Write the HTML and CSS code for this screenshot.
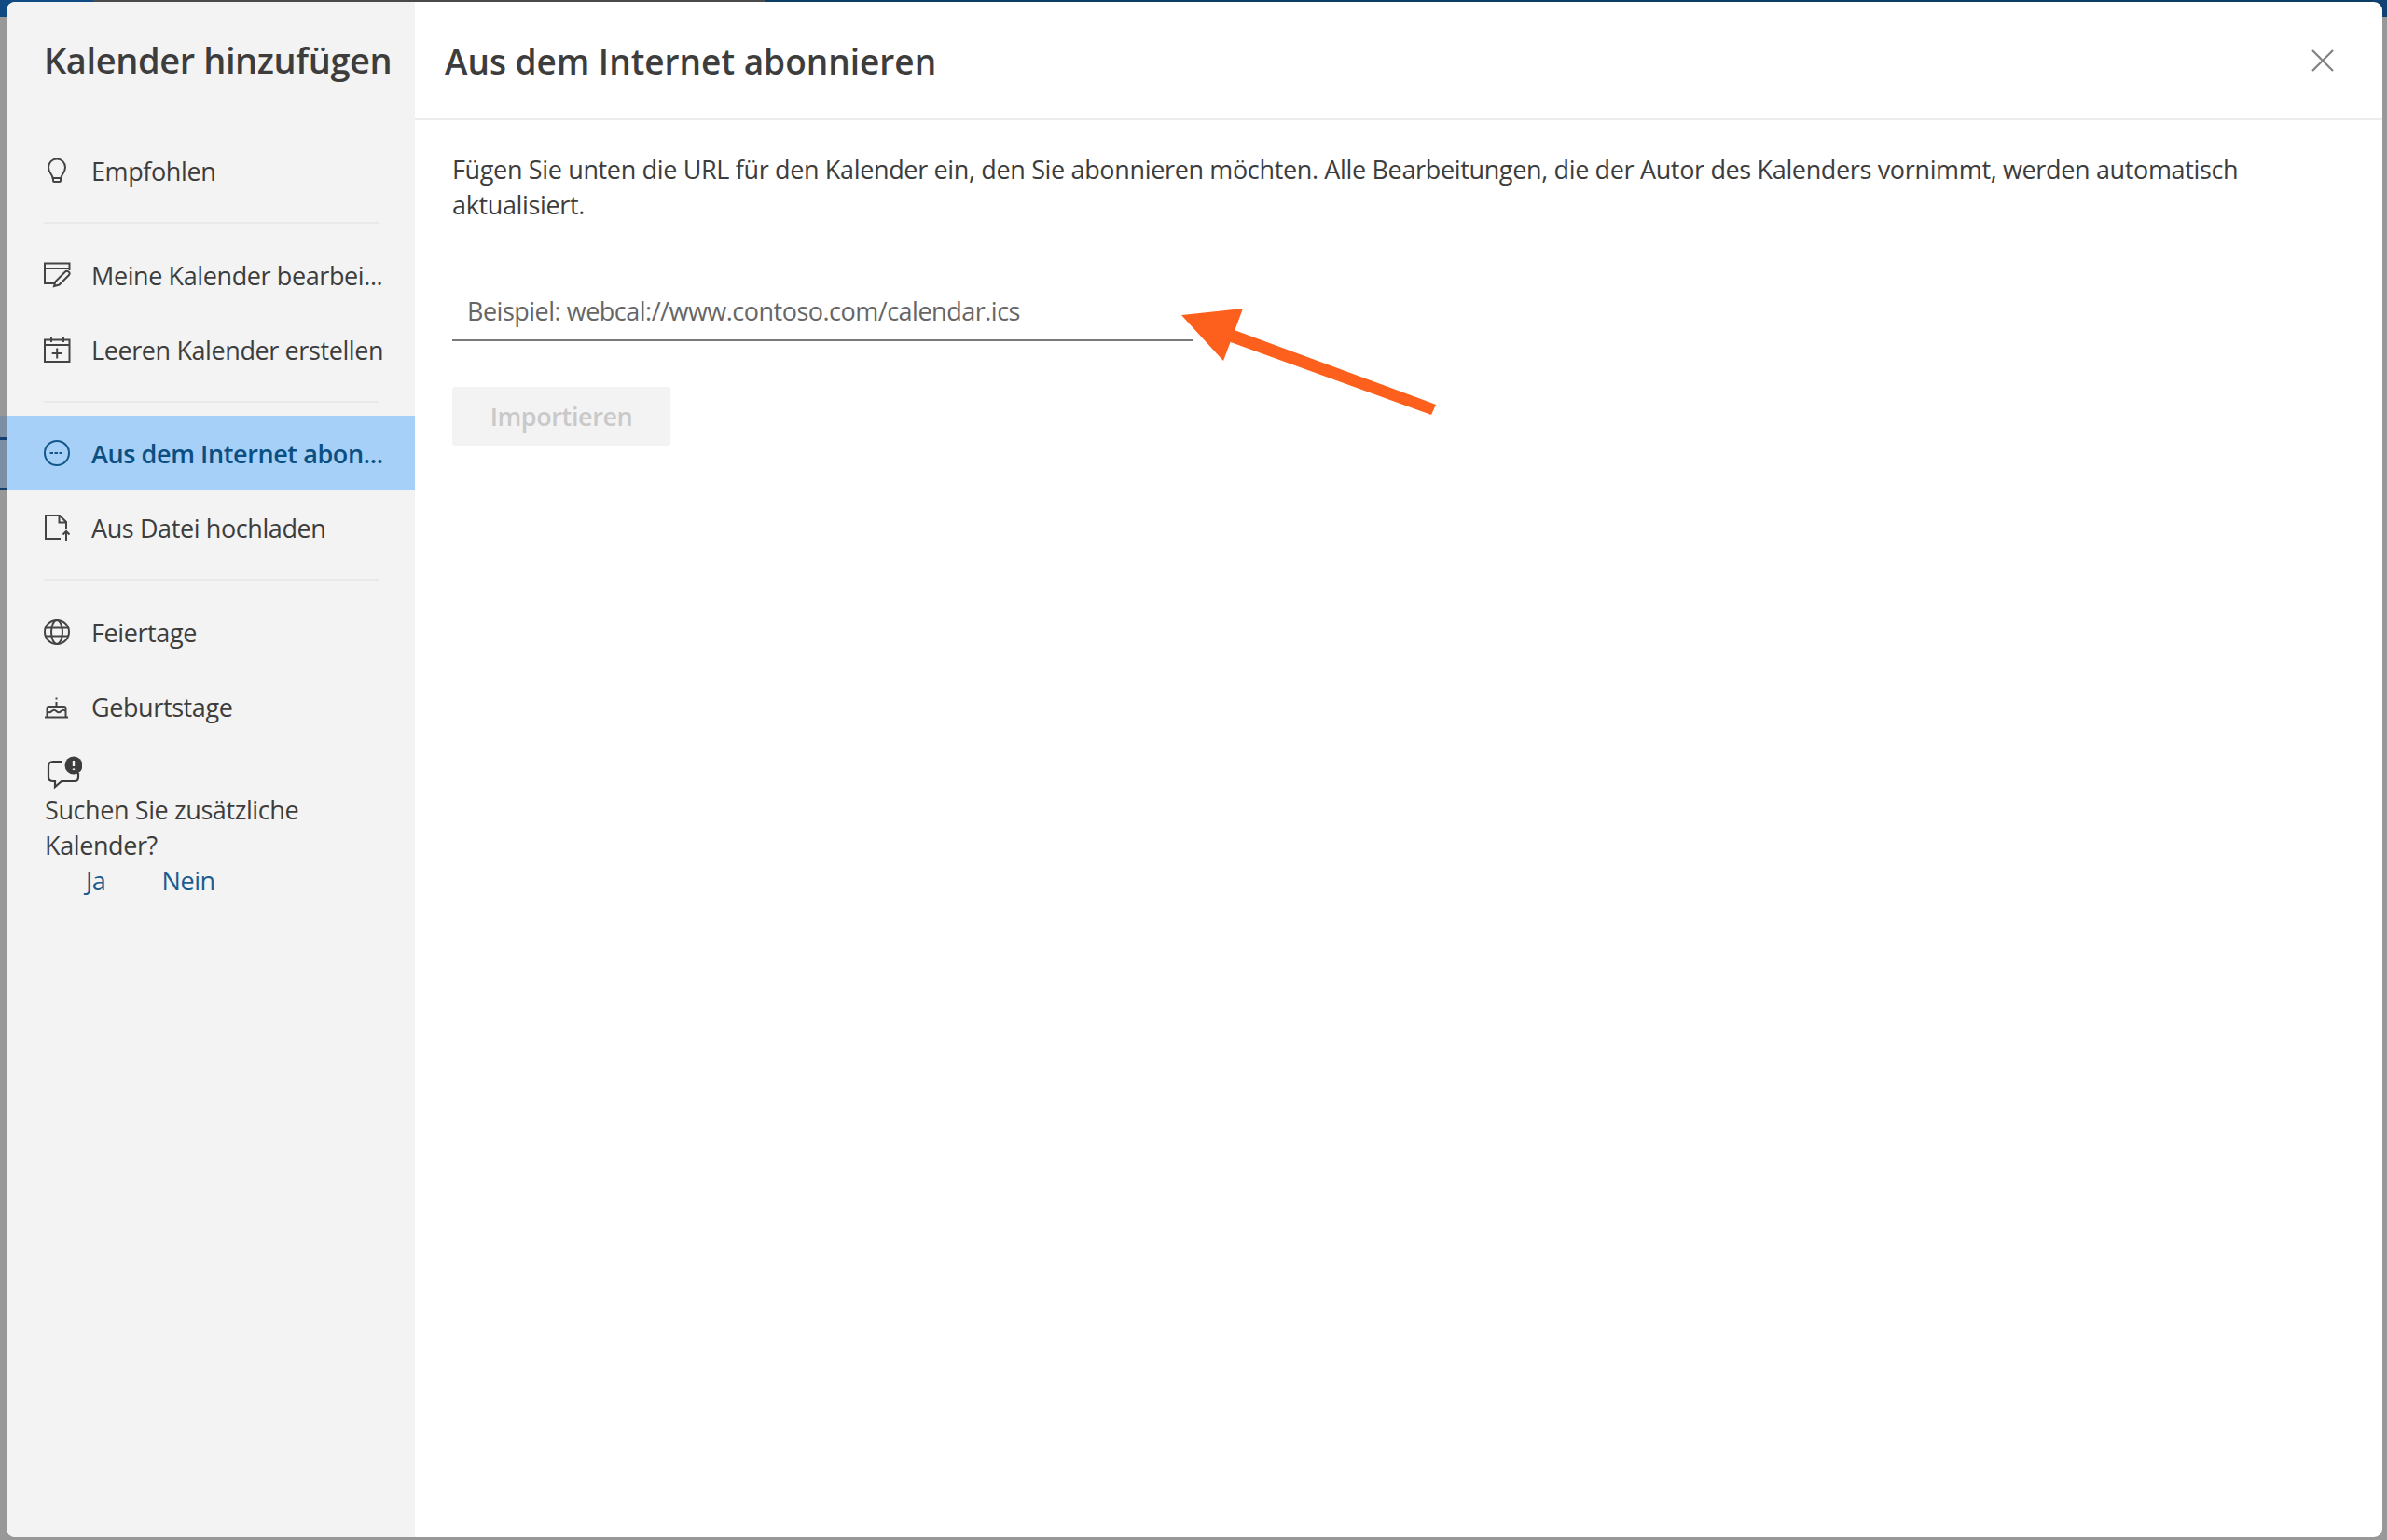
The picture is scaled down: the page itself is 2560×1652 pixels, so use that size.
FILE: index.html
```html
<!DOCTYPE html>
<html lang="de">
<head>
<meta charset="utf-8">
<title>Kalender hinzufügen</title>
<link rel="stylesheet" href="styles.css">
</head>
<body>
<div class="backdrop">
  <span class="bd-navy"></span>
  <span class="bd-gray"></span>
  <span class="bd-blue-left"></span>
  <span class="bd-blue-right"></span>
  <span class="bd-left-band"></span>
  <span class="bd-mark bd-mark-a"></span>
  <span class="bd-mark bd-mark-b"></span>
</div>
<div class="dialog">
  <aside class="sidebar">
    <h1 class="side-title">Kalender hinzufügen</h1>
    <div class="side-item">
      <svg class="ico" viewBox="0 0 28 28"><path d="M9.500 22c0-4-4.500-5.500-4.500-11.500a9 9 0 0 1 18 0C23 16.500 18.500 18 18.500 22zM10 22v2.500a1.500 1.500 0 0 0 1.500 1.500h5a1.500 1.500 0 0 0 1.500-1.500V22"/></svg>
      <span>Empfohlen</span>
    </div>
    <hr class="side-rule">
    <div class="side-item">
      <svg class="ico" viewBox="0 0 28 28"><path d="M12 23H1V1.500h26.500V9M1 7h26.500M11 26l1.500-5L23 10.500q1.500-1.500 3.500 0t.5 3.500L16.500 24.500z"/></svg>
      <span>Meine Kalender bearbei...</span>
    </div>
    <div class="side-item">
      <svg class="ico" viewBox="0 0 28 28"><path d="M1 3.500h26.500V27H1zM1 9h26.500M8 1v5M21 1v5M14.200 12.500v11M8.700 18h11"/></svg>
      <span>Leeren Kalender erstellen</span>
    </div>
    <hr class="side-rule side-rule-tight">
    <div class="side-item is-active">
      <svg class="ico" viewBox="0 0 28 28"><circle cx="14" cy="14" r="13"/><path class="dash" d="M6.500 14h15"/></svg>
      <span>Aus dem Internet abon...</span>
    </div>
    <div class="side-item">
      <svg class="ico" viewBox="0 0 28 28"><path d="M18 26H2V1h15l7 7v8M16.500 1v7.500H24M24 28V18M20.500 21.500L24 18l3.500 3.500"/></svg>
      <span>Aus Datei hochladen</span>
    </div>
    <hr class="side-rule">
    <div class="side-item">
      <svg class="ico" viewBox="0 0 28 28"><circle cx="14" cy="14" r="13"/><ellipse cx="14" cy="14" rx="6" ry="13"/><path d="M2 9.500h24M2 18.500h24"/></svg>
      <span>Feiertage</span>
    </div>
    <div class="side-item">
      <svg class="ico" viewBox="0 0 28 28"><path d="M1 25.500h25M3.500 25.500V16q0-2 2-2h16q2 0 2 2v9.500M3.500 19q2.500 2.500 5 0t5 0 5 0 5 0M13.500 14V9M13.500 4.500v2"/></svg>
      <span>Geburtstage</span>
    </div>
    <div class="feedback">
      <svg class="feedback-ico" viewBox="0 0 38 36"><path d="M17 6H7Q2 6 2 11v12q0 4 5 4h2v6l7-6h14q4 0 4-4v-5"/><circle cx="29" cy="10" r="9.500" class="fill"/><path class="mark" d="M29 5v6M29 13.500v1.500"/></svg>
      <p class="feedback-text">Suchen Sie zusätzliche Kalender?</p>
      <div class="feedback-links"><a>Ja</a><a>Nein</a></div>
    </div>
  </aside>
  <main class="content">
    <header class="content-head">
      <h2 class="content-title">Aus dem Internet abonnieren</h2>
      <svg class="close" viewBox="0 0 24 24"><path d="M1 1l22 22M23 1L1 23"/></svg>
    </header>
    <section class="content-body">
      <p class="intro">Fügen Sie unten die URL für den Kalender ein, den Sie abonnieren möchten. Alle Bearbeitungen, die der Autor des Kalenders vornimmt, werden automatisch aktualisiert.</p>
      <div class="url-field">Beispiel: webcal://www.contoso.com/calendar.ics</div>
      <div class="import-btn">Importieren</div>
    </section>
  </main>
</div>
<svg class="arrow" viewBox="0 0 290 125"><polygon points="6,18 72,11 51,67"/><polygon points="60,33 279,114 274,125 56,46"/></svg>
</body>
</html>
```
FILE: styles.css
```css
* { box-sizing: border-box; }
html, body { margin: 0; height: 100%; }
body {
  background: #989898;
  font-family: "Open Sans", "Noto Sans", sans-serif;
  color: #3d3d3d;
  padding: 2px 5px 3px 7px;
  position: relative;
  overflow: hidden;
}
.backdrop span { position: absolute; display: block; }
.bd-navy { left: 820px; right: 0; top: 0; height: 3px; background: #0b3d66; }
.bd-gray { left: 100px; width: 720px; top: 0; height: 3px; background: #4a4a4a; }
.bd-blue-left { left: 0; top: 0; width: 100px; height: 18px; background: #0f4b82; }
.bd-blue-right { right: 0; top: 0; width: 16px; height: 18px; background: #0f4273; }
.bd-left-band {
  left: 0; top: 446px; width: 7px; height: 79px;
  background: #7b8ea3;
}
.bd-mark { height: 3px; background: #123f6d; }
.bd-mark-a { left: 0; top: 469px; width: 7px; }
.bd-mark-b { left: 0; top: 523px; width: 7px; }
.dialog {
  position: relative;
  display: flex;
  height: 100%;
  border-radius: 9px;
  overflow: hidden;
  background: #fff;
}
.sidebar {
  width: 438px;
  flex: none;
  background: #f3f3f3;
}
.side-title {
  margin: 0;
  height: 141px;
  padding: 37px 0 0 40px;
  font-size: 38px;
  line-height: 50px;
  font-weight: 600;
  letter-spacing: -0.4px;
  white-space: nowrap;
}
.side-item {
  display: flex;
  align-items: center;
  gap: 23px;
  height: 80px;
  padding-left: 40px;
  font-size: 27px;
  white-space: nowrap;
  letter-spacing: -0.4px;
}
.side-item.is-active {
  background: #a6d0f7;
  color: #0b4f82;
  font-weight: 600;
}
.ico {
  width: 28px; height: 28px; flex: none;
  fill: none; stroke: #444; stroke-width: 2;
  overflow: visible;
}
.is-active .ico { stroke: #13578a; }
.dash { stroke-dasharray: 3.500 1.500; }
.side-rule {
  border: 0;
  height: 2px;
  width: 359px;
  margin: 15px 0 15px 40px;
  background: #e9e9e9;
}
.side-rule-tight { margin-bottom: 14px; }
.feedback { padding: 13px 0 0 41px; }
.feedback-ico {
  display: block;
  width: 38px; height: 36px;
  margin-left: 2px;
  fill: none; stroke: #3d3d3d; stroke-width: 2.200;
}
.feedback-ico .fill { fill: #3d3d3d; stroke: none; }
.feedback-ico .mark { stroke: #f3f3f3; stroke-width: 2.400; }
.feedback-text {
  margin: 3px 0 0;
  width: 320px;
  font-size: 27px;
  line-height: 38px;
  letter-spacing: -0.4px;
}
.feedback-links {
  display: flex;
  gap: 60px;
  padding-left: 44px;
  font-size: 27px;
  line-height: 38px;
  letter-spacing: -0.4px;
  color: #1a5c8e;
}
.content { flex: 1; min-width: 0; }
.content-head {
  height: 127px;
  border-bottom: 2px solid #ececec;
  display: flex;
  align-items: center;
  justify-content: space-between;
  padding: 2px 52px 0 32px;
}
.content-title {
  margin: 0;
  font-size: 37px;
  font-weight: 600;
  letter-spacing: 0;
}
.close {
  width: 24px; height: 24px;
  margin-top: -2px;
  fill: none; stroke: #808080; stroke-width: 2.200;
}
.content-body { padding: 34px 40px 0; }
.intro {
  margin: 0;
  width: 1990px;
  font-size: 27px;
  line-height: 38px;
  letter-spacing: -0.35px;
}
.url-field {
  margin-top: 68px;
  width: 795px;
  height: 59px;
  padding: 0 16px;
  border-bottom: 2px solid #7a7a7a;
  font-size: 27px;
  line-height: 54px;
  letter-spacing: -0.5px;
  color: #666;
}
.import-btn {
  margin-top: 49px;
  width: 234px;
  height: 63px;
  border-radius: 3px;
  background: #f3f3f3;
  color: #c9c9c9;
  font-size: 27px;
  font-weight: 600;
  line-height: 63px;
  text-align: center;
  letter-spacing: -0.4px;
}
.arrow {
  position: absolute;
  left: 1261px;
  top: 320px;
  width: 290px;
  height: 125px;
  fill: #fd5f1c;
}
```
